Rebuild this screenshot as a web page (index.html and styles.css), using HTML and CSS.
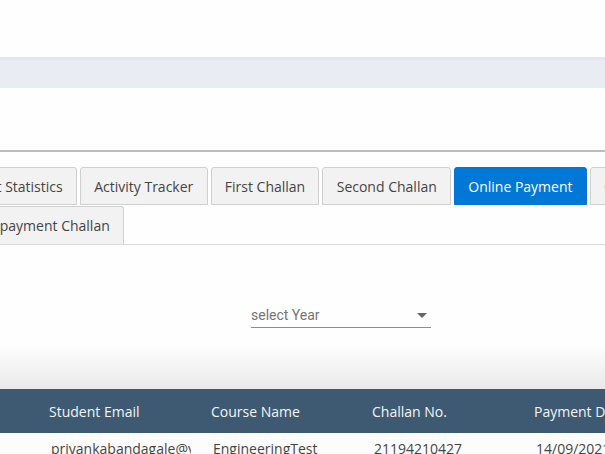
FILE: index.html
```html
<!DOCTYPE html>
<html>
<head>
<meta charset="utf-8">
<link rel="stylesheet" href="styles.css">
</head>
<body>
<div class="top"></div>
<div class="band"></div>
<div class="gap"></div>
<div class="rule"></div>
<div class="tabs">
  <div class="tab-row row-one">
    <div class="tab">Student Statistics</div>
    <div class="tab">Activity Tracker</div>
    <div class="tab">First Challan</div>
    <div class="tab">Second Challan</div>
    <div class="tab active">Online Payment</div>
    <div class="tab">Offline Payment</div>
  </div>
  <div class="tab-row row-two">
    <div class="tab">Repayment Challan</div>
  </div>
</div>
<div class="filter">
  <div class="select">
    <span class="placeholder">select Year</span>
    <span class="caret"></span>
  </div>
</div>
<div class="shade"></div>
<div class="table">
  <div class="thead">
    <div class="cell">Student Email</div>
    <div class="cell">Course Name</div>
    <div class="cell">Challan No.</div>
    <div class="cell">Payment Date</div>
  </div>
  <div class="trow">
    <div class="cell">priyankabandagale@yahoo.com</div>
    <div class="cell">EngineeringTest</div>
    <div class="cell">21194210427</div>
    <div class="cell">14/09/2021</div>
  </div>
</div>
</body>
</html>
```
FILE: styles.css
```css
html, body {
  margin: 0;
  padding: 0;
  background: #fefefe;
  overflow: hidden;
  font-family: "Open Sans", "Liberation Sans", sans-serif;
}
.top { height: 57px; background: #fefefe; }
.band {
  height: 31px;
  background: #eaecf4;
  border-top: 1px solid #e2e4e9;
  box-sizing: border-box;
  box-shadow: inset 0 4px 2px -2px #e5e7ee;
}
.gap { height: 62px; }
.rule { height: 2px; background: #bdbdbd; }
.tabs {
  padding-top: 15px;
  border-bottom: 1px solid #d9d9d9;
  overflow: hidden;
}
.tab-row {
  display: flex;
  gap: 3px;
  white-space: nowrap;
}
.row-one { margin-left: -64px; }
.row-two { margin-left: -31px; margin-top: 1px; }
.tab {
  flex: none;
  height: 38px;
  box-sizing: border-box;
  padding: 1px 13.25px 0;
  line-height: 36px;
  font-size: 14px;
  color: #444;
  background: #f2f2f2;
  border: 1px solid #cfcfcf;
  border-radius: 3px 3px 0 0;
}
.row-two .tab { border-bottom: 0; }
.tab.active {
  background: #0177d6;
  border-color: #0177d6;
  color: #fff;
}
.filter {
  height: 100px;
  display: flex;
  align-items: flex-start;
  padding-top: 55px;
  box-sizing: border-box;
}
.select {
  margin-left: 251px;
  width: 180px;
  height: 28px;
  border-bottom: 1px solid #8c8c8c;
  display: flex;
  align-items: center;
  justify-content: space-between;
  box-sizing: border-box;
  padding: 2px 4px 0 0;
}
.placeholder {
  font-family: Roboto, "Liberation Sans", sans-serif;
  font-size: 14px;
  color: #757575;
}
.caret {
  width: 0;
  height: 0;
  border-left: 5px solid transparent;
  border-right: 5px solid transparent;
  border-top: 5px solid #666;
  margin-top: 1px;
}
.shade {
  height: 44px;
  background: linear-gradient(#fefefe, #e9e9e9);
}
.thead, .trow {
  display: grid;
  grid-template-columns: 49px 162px 161px 162px 200px;
  white-space: nowrap;
}
.thead::before, .trow::before { content: ""; }
.thead {
  height: 44px;
  background: #3e5a73;
  align-items: center;
}
.thead .cell {
  color: #f4f4f4;
  font-size: 14px;
  padding-top: 1px;
}
.trow {
  background: #fcfcfc;
  padding-top: 6px;
}
.trow .cell {
  color: #444;
  font-size: 14px;
  padding-left: 2px;
  overflow: hidden;
  width: 140px;
}
```
